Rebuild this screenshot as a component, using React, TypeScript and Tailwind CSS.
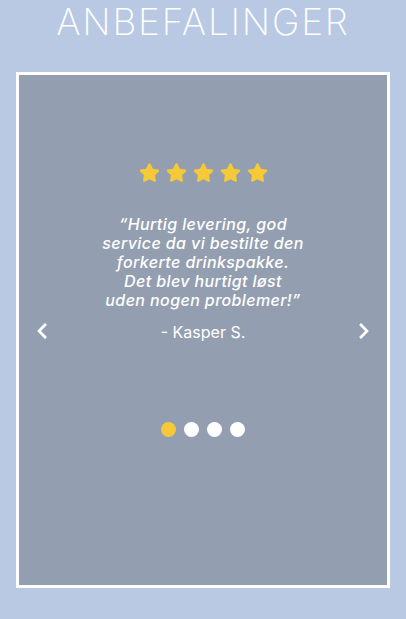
import { FaStar, FaChevronLeft, FaChevronRight } from "react-icons/fa";

const quote = [
  "\u201cHurtig levering, god",
  "service da vi bestilte den",
  "forkerte drinkspakke.",
  "Det blev hurtigt l\u00f8st",
  "uden nogen problemer!\u201d",
];

export default function App() {
  return (
    <div className="w-[406px] h-[619px] bg-[#b9c9e3] overflow-hidden font-['Inter','Open_Sans',sans-serif] text-white">
      <h1 className="text-center text-[37px] leading-[43px] font-extralight tracking-[1.8px]">ANBEFALINGER</h1>

      <div className="mx-[16px] mt-[29px] h-[516px] border-[3px] border-white bg-[#939eb0] flex flex-col items-center relative">
        <div className="flex gap-[6px] mt-[87px] text-[#f5c937]">
          {[0, 1, 2, 3, 4].map((i) => (
            <FaStar key={i} size={21} />
          ))}
        </div>

        <div className="mt-[32px] text-center italic font-medium text-[16px] leading-[19px] tracking-[0.4px]">
          {quote.map((l) => (
            <p key={l}>{l}</p>
          ))}
        </div>

        <p className="mt-[12px] text-[16px] leading-[20px]">- Kasper S.</p>

        <FaChevronLeft size={18} className="absolute left-[14px] top-[247px]" />
        <FaChevronRight size={18} className="absolute right-[14px] top-[247px]" />

        <div className="flex gap-[8px] mt-[80px]">
          <span className="w-[15px] h-[15px] rounded-full bg-[#f5c937]" />
          <span className="w-[15px] h-[15px] rounded-full bg-white" />
          <span className="w-[15px] h-[15px] rounded-full bg-white" />
          <span className="w-[15px] h-[15px] rounded-full bg-white" />
        </div>
      </div>
    </div>
  );
}
